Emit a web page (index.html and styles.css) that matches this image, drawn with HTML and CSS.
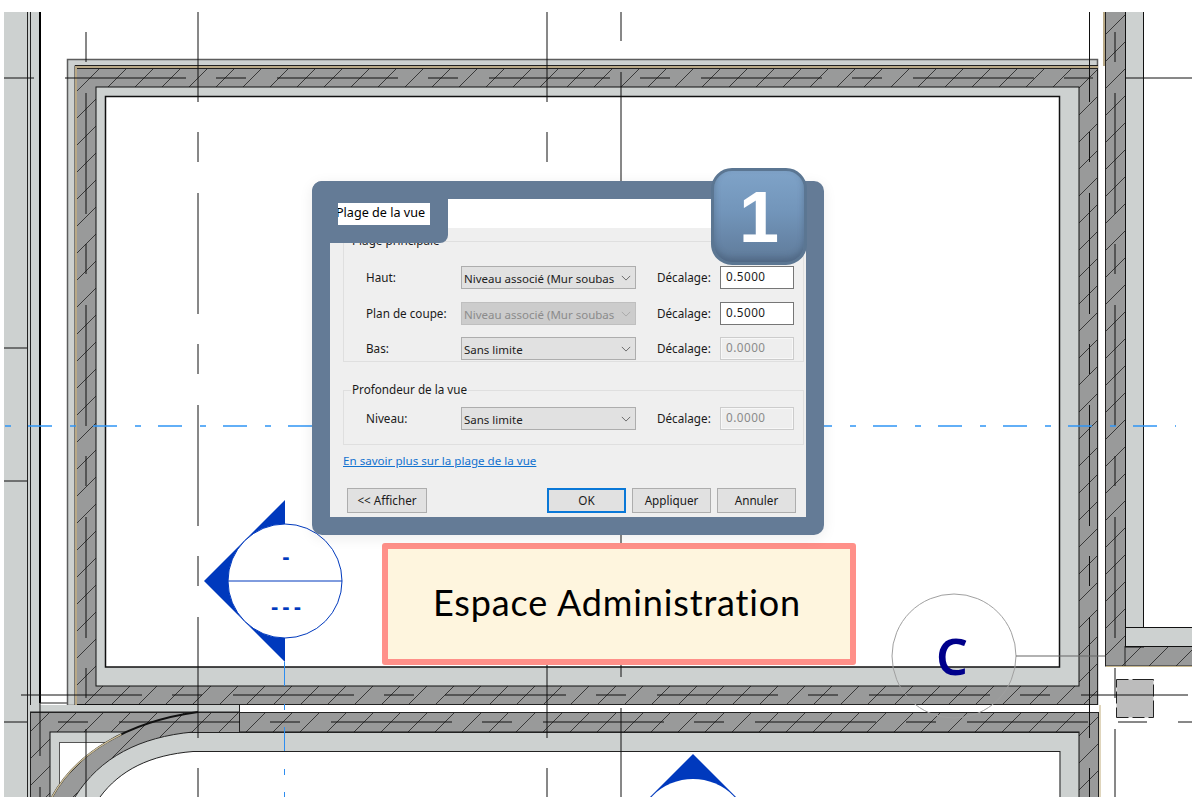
FILE: index.html

```html
<!DOCTYPE html>
<html lang="fr">
<head>
  <meta charset="UTF-8">
  <meta name="viewport" content="width=device-width, initial-scale=1.0">
  <title>Plage de la vue</title>
  <link rel="stylesheet" href="styles.css">
</head>
<body>

  <div class="stage">

    <!-- plan -->
    <svg class="plan" width="1192" height="812" viewBox="0 0 1192 812">
      <defs>
        <pattern id="hatch" width="27" height="27" patternUnits="userSpaceOnUse" patternTransform="translate(2 4)">
          <rect width="27" height="27" fill="#999a9a"/>
          <path d="M-3 3L3 -3M0 27L27 0M24 30L30 24" stroke="#2c2c2c" stroke-width="0.9" fill="none"/>
        </pattern>
      </defs>
      <svg x="4" y="12" width="1188" height="785" viewBox="4 12 1188 785">

        <!-- mur de gauche -->
        <rect class="light" x="4" y="12" width="36" height="800"/>
        <path class="line" d="M27.5 12V812M30.5 12V812"/>
        <path class="line-heavy" d="M40 12V703"/>
        <rect x="41" y="121" width="2" height="29" fill="#fff"/>
        <path class="line" d="M40 703H67"/>

        <!-- salle principale -->
        <rect class="light outlined" x="67.5" y="59.5" width="1030" height="646"/>
        <rect class="hatched" x="76.5" y="68.5" width="1021" height="636"/>
        <rect class="light" x="96" y="87" width="983" height="599" stroke="#111" stroke-width="1"/>
        <rect x="105.5" y="96.5" width="954" height="570.5" fill="#fff" stroke="#111" stroke-width="1.5"/>
        <path class="line" d="M75 705V65.5H1098"/>
        <path class="tan" d="M76 705V67H1098"/>
        <path class="line-heavy" d="M77 705.5H198"/>

        <!-- salle du bas -->
        <rect class="light" x="30" y="705" width="210" height="8"/>
        <rect class="hatched" x="30.5" y="712" width="1068" height="100"/>
        <rect x="240" y="705" width="860" height="7" fill="#fff"/>
        <rect class="light" x="50" y="732" width="1029" height="80" stroke="#111" stroke-width="1"/>
        <rect x="59.5" y="742.5" width="60" height="70" fill="#fff" stroke="#555" stroke-width="1"/>
        <path fill="url(#hatch)" d="M52 797C75 755 125 722 198 712L240 712V732H193C140 737 100 757 75 797Z"/>
        <path class="light" d="M75 797C100 757 140 737 193 732H300V751H193C150 755 120 770 100 797Z"/>
        <path fill="#fff" d="M100 797C120 770 150 755 193 751.5H1059.5V812H100Z"/>
        <path class="line" d="M75 797C100 757 140 737 193 732M100 797C120 770 150 755 193 751.5"/>
        <path class="line" d="M30 712.5H240M239.5 705V732M240 712.5H1098M188 732.5H1079M193 751.5H1060M1060 751V812"/>
        <path class="curve-dark" d="M52 797C75 755 125 722 198 712"/>
        <path class="curve-tan" d="M52 797C75 755 125 722 198 712"/>
        <path class="tan-thin" d="M1100 705V812"/>

        <!-- mur de droite -->
        <path class="tan" d="M1104 12V66"/>
        <rect class="hatched" x="1105.5" y="11" width="20" height="655"/>
        <rect class="hatched" x="1125" y="646.5" width="70" height="19.5"/>
        <rect class="light" x="1125.5" y="11" width="18" height="636" stroke="#111" stroke-width="1"/>
        <rect class="light" x="1125.5" y="627.5" width="70" height="19" stroke="#111" stroke-width="1"/>
        <rect x="1126" y="628" width="18" height="18" fill="#cdd1d0"/>
        <path class="tan-thin" d="M1106 666.5H1192"/>

        <!-- poteau -->
        <rect x="1116.5" y="679.5" width="37" height="38" fill="#bcbcbc" stroke="#222" stroke-width="1" stroke-dasharray="12 4 22 4"/>

        <!-- axes -->
        <g class="axis">
          <path class="axis-a" d="M198 12V812"/>
          <path class="axis-a" d="M547 12V812"/>
          <path class="axis-a" d="M1089.5 12V812"/>
          <path class="axis-b" d="M86 32V812"/>
          <path class="axis-b" d="M1115 32V812"/>
          <path class="axis-c" d="M621 12V812"/>
          <path class="axis-d" d="M4 78H1093"/>
          <path class="axis-e" d="M21 695H1188"/>
          <path class="axis-f" d="M58 722H1092"/>
          <path d="M4 348H27M4 481H27M4 722H27M1125 78H1192M40 703V756M40 787V797M1118 722H1147M1178 722H1192"/>
        </g>
        <path class="grid-line" d="M4 426H1176"/>
        <path class="grid-line-v" d="M284.5 662V797"/>

        <!-- repere de coupe -->
        <polygon class="mark" points="285,500 204,581 285,662"/>
        <circle cx="285" cy="581" r="57" fill="#fff" stroke="#0039bd" stroke-width="1"/>
        <path d="M228 581H342" stroke="#0039bd" stroke-width="1"/>
        <text class="mark-text" x="288" y="564">-</text>
        <text class="mark-text" x="288" y="614">---</text>

        <polygon class="mark" points="693,754 612,835 774,835"/>
        <circle cx="693" cy="836" r="57" fill="#fff"/>

        <!-- repere C -->
        <circle class="tag" cx="954" cy="656" r="62"/>
        <path d="M1016 656H1105" stroke="#666" stroke-width="1.2"/>
        <text class="tag-text" x="952" y="675">C</text>
      </svg>
    </svg>

    <!-- etiquette -->
    <div class="room-label">Espace Administration</div>

    <!-- boite de dialogue -->
    <div class="dialog">
      <div class="dialog-inner">
        <div class="dialog-title"></div>
        <div class="dialog-body">

          <div class="group group-main">
            <span class="legend">Plage principale</span>
            <div class="row">
              <label>Haut:</label>
              <div class="select"><span>Niveau associé (Mur soubas</span><svg class="chevron" viewBox="0 0 12 7"><path d="M1 1l5 5 5-5"/></svg></div>
              <label class="offset">Décalage:</label>
              <div class="input">0.5000</div>
            </div>
            <div class="row">
              <label>Plan de coupe:</label>
              <div class="select disabled"><span>Niveau associé (Mur soubas</span><svg class="chevron" viewBox="0 0 12 7"><path d="M1 1l5 5 5-5"/></svg></div>
              <label class="offset">Décalage:</label>
              <div class="input">0.5000</div>
            </div>
            <div class="row row-tight">
              <label>Bas:</label>
              <div class="select"><span>Sans limite</span><svg class="chevron" viewBox="0 0 12 7"><path d="M1 1l5 5 5-5"/></svg></div>
              <label class="offset">Décalage:</label>
              <div class="input disabled">0.0000</div>
            </div>
          </div>

          <div class="group group-depth">
            <span class="legend">Profondeur de la vue</span>
            <div class="row">
              <label>Niveau:</label>
              <div class="select"><span>Sans limite</span><svg class="chevron" viewBox="0 0 12 7"><path d="M1 1l5 5 5-5"/></svg></div>
              <label class="offset">Décalage:</label>
              <div class="input disabled">0.0000</div>
            </div>
          </div>

          <a class="more" href="#">En savoir plus sur la plage de la vue</a>

          <div class="buttons">
            <button type="button">&lt;&lt; Afficher</button>
            <button type="button" class="ok">OK</button>
            <button type="button">Appliquer</button>
            <button type="button">Annuler</button>
          </div>
        </div>
      </div>

      <div class="tab"><span class="tab-label"><span>Plage de la vue</span></span></div>
    </div>

    <div class="badge">1</div>
  </div>

</body>
</html>
```

FILE: styles.css

```css
body {
  margin: 0;
  background-color: #fff;
  font-family: "Noto Sans", "Open Sans", sans-serif;
}

.stage {
  position: relative;
  width: 1192px;
  height: 812px;
  overflow: hidden;
}

.plan {
  position: absolute;
  left: 0;
  top: 0;
}

.light { fill: #cdd1d0; }
.outlined { stroke: #5c5c5c; stroke-width: 1.5; }
.hatched { fill: url(#hatch); stroke: #222; stroke-width: 1; }
.line { stroke: #222; stroke-width: 1; fill: none; }
.line-heavy { stroke: #000; stroke-width: 2; fill: none; }
.tan { stroke: #b9a987; stroke-width: 2; fill: none; }
.tan-thin { stroke: #c9b98f; stroke-width: 1.2; fill: none; }
.curve-dark { stroke: #111; stroke-width: 1.8; fill: none; }
.curve-tan { stroke: #cfc09a; stroke-width: 1.4; stroke-dasharray: 95 200; fill: none; }

.axis path {
  stroke: #111;
  stroke-width: 1;
  fill: none;
}

.axis-a { stroke-dasharray: 121 30 30 31; stroke-dashoffset: 31; }
.axis-b { stroke-dasharray: 121 30 30 31; stroke-dashoffset: 151; }
.axis-c { stroke-dasharray: 121 30 30 31; stroke-dashoffset: 152; }
.axis-d { stroke-dasharray: 121 30 30 31; stroke-dashoffset: 151; }
.axis-e { stroke-dasharray: 121 30 30 31; }
.axis-f { stroke-dasharray: 121 30 30 31; stroke-dashoffset: 151; }

.grid-line {
  stroke: #2f95f5;
  stroke-width: 1.5;
  stroke-dasharray: 24 18 6 17;
  stroke-dashoffset: 41;
  fill: none;
}

.grid-line-v {
  stroke: #2d8df0;
  stroke-width: 1;
  stroke-dasharray: 24 18 6 17;
  fill: none;
}

.mark { fill: #0039bd; }

.mark-text {
  font-family: "Liberation Sans", sans-serif;
  font-size: 22px;
  font-weight: bold;
  letter-spacing: 4px;
  fill: #0039bd;
  text-anchor: middle;
}

.tag {
  fill: none;
  stroke: #a0a0a0;
  stroke-width: 1;
}

.tag-text {
  font-family: "Noto Sans", sans-serif;
  font-size: 50px;
  font-weight: 600;
  fill: #00008b;
  text-anchor: middle;
}

.room-label {
  position: absolute;
  left: 382px;
  top: 543px;
  width: 474px;
  height: 122px;
  box-sizing: border-box;
  display: flex;
  align-items: center;
  justify-content: center;
  padding: 0 4px 4px 0;
  background-color: #fef5de;
  border: 6px solid #ff9089;
  border-radius: 3px;
  font-family: Lato, sans-serif;
  font-size: 36px;
  letter-spacing: 0.85px;
  color: #000;
}

.dialog {
  position: absolute;
  left: 312px;
  top: 181px;
  width: 512px;
  height: 354px;
  box-sizing: border-box;
  padding: 18px;
  background-color: #647b96;
  border-radius: 10px;
  box-shadow: 0 3px 14px rgba(0, 0, 0, 0.08);
  font-size: 11.7px;
  color: #1a1a1a;
}

.dialog-inner {
  height: 318px;
  background-color: #efefef;
}

.dialog-title {
  height: 29px;
  background-color: #fff;
}

.dialog-body {
  padding: 13px 0 0 13px;
}

.tab {
  position: absolute;
  left: 0;
  top: 0;
  width: 136px;
  height: 62px;
  background-color: #647b96;
  border-radius: 10px 0 8px 0;
}

.tab-label {
  position: absolute;
  left: 26px;
  top: 22px;
  width: 92px;
  height: 22px;
  background-color: #fff;
  color: #000;
  font-size: 12.6px;
  line-height: 20px;
  overflow: hidden;
  white-space: nowrap;
}

.tab-label span {
  margin-left: -2px;
}

.group {
  position: relative;
  width: 461px;
  box-sizing: border-box;
  border: 1px solid #dfdfdf;
}

.group-main {
  height: 121px;
  padding-top: 24px;
}

.group-depth {
  height: 55px;
  margin-top: 28px;
  padding-top: 16px;
}

.legend {
  position: absolute;
  left: 7px;
  top: -10px;
  padding: 0 1px;
  background-color: #efefef;
  line-height: 16px;
}

.row {
  display: grid;
  grid-template-columns: 95px 175px 84px 74px;
  height: 23px;
  margin-left: 22px;
  margin-bottom: 13px;
  align-items: center;
}

.row label {
  padding-bottom: 2px;
}

.row-tight {
  margin-top: -1px;
  margin-bottom: 0;
}

.offset {
  padding-left: 21px;
}

.select {
  display: flex;
  align-items: center;
  justify-content: space-between;
  height: 23px;
  box-sizing: border-box;
  padding: 1px 4px 0 2px;
  background-color: #e1e1e1;
  border: 1px solid #adadad;
  font-size: 11.5px;
  color: #222;
}

.select span {
  width: 152px;
  overflow: hidden;
  white-space: nowrap;
}

.select.disabled {
  background-color: #cccccc;
  border-color: #bfbfbf;
  color: #8b8b8b;
}

.chevron {
  width: 10px;
  height: 6px;
  flex: none;
}

.chevron path {
  fill: none;
  stroke: #555;
  stroke-width: 1;
}

.select.disabled .chevron path {
  stroke: #a5a5a5;
}

.input {
  height: 23px;
  box-sizing: border-box;
  padding-left: 5px;
  background-color: #fff;
  border: 1px solid #767676;
  line-height: 19px;
  letter-spacing: 0.5px;
}

.input.disabled {
  background-color: #eeeeee;
  border-color: #cccccc;
  box-shadow: inset 0 0 0 1px #f7f7f7;
  color: #8a8a8a;
}

.more {
  display: block;
  height: 17px;
  margin-top: 7px;
  font-size: 11.6px;
  line-height: 17px;
  color: #1272cf;
}

.buttons {
  display: flex;
  gap: 6px;
  width: 449px;
  margin-top: 19px;
  margin-left: 4px;
}

.buttons button {
  width: 79px;
  height: 25px;
  padding: 0 0 2px;
  background-color: #e1e1e1;
  border: 1px solid #adadad;
  font: inherit;
  color: #1a1a1a;
}

.buttons button:first-child {
  width: 80px;
  margin-right: auto;
}

.buttons .ok {
  border: 2px solid #0a78d7;
}

.badge {
  position: absolute;
  left: 711px;
  top: 168px;
  width: 96px;
  height: 97px;
  box-sizing: border-box;
  display: flex;
  align-items: center;
  justify-content: center;
  background: linear-gradient(#7fa3c8, #7295ba 45%, #5f7a99);
  border: 3px solid #5b7692;
  border-radius: 21px;
  box-shadow: inset 0 -4px 6px rgba(60, 80, 105, 0.45);
  font-family: "Liberation Sans", sans-serif;
  font-size: 72px;
  font-weight: bold;
  color: #fff;
}
```
